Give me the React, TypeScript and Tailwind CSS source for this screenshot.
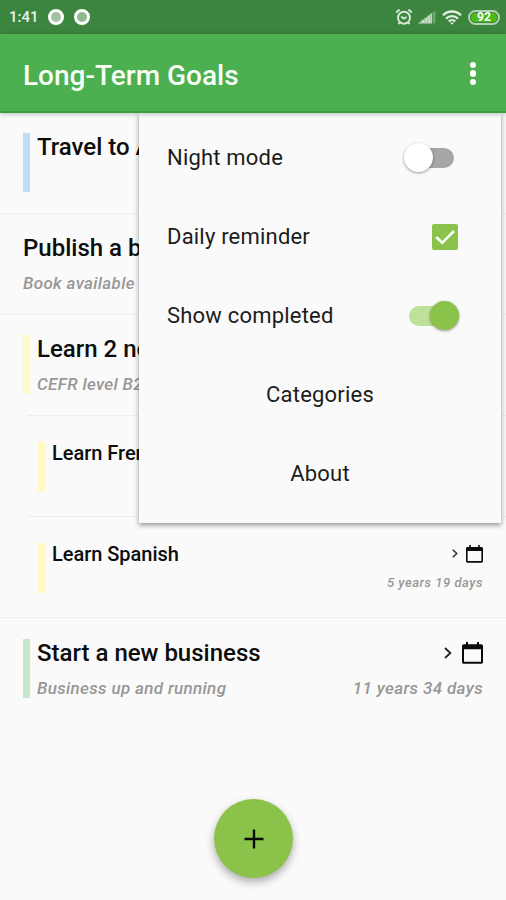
import React, { useState } from 'react';
import clsx from 'clsx';

interface Goal {
  id: number;
  title: string;
  note?: string;
  due?: string;
  color?: string;
  sub?: boolean;
  divider?: 'full' | 'inset';
}

const goals: Goal[] = [
  { id: 1, title: 'Travel to A', color: 'bg-[#bbdefb]', divider: 'full' },
  { id: 2, title: 'Publish a book', note: 'Book available', divider: 'full' },
  { id: 3, title: 'Learn 2 new', note: 'CEFR level B2', color: 'bg-[#fff9c4]', divider: 'inset' },
  { id: 4, title: 'Learn French', color: 'bg-[#fff9c4]', sub: true, divider: 'inset' },
  { id: 5, title: 'Learn Spanish', due: '5 years 19 days', color: 'bg-[#fff9c4]', sub: true, divider: 'full' },
  { id: 6, title: 'Start a new business', note: 'Business up and running', due: '11 years 34 days', color: 'bg-[#c8e6c9]' },
];

function StatusBar() {
  return (
    <div className="h-[34px] shrink-0 bg-[#3b853e] flex items-center justify-between pl-[9px] pr-[6px] text-[#e9f2e9]">
      <div className="flex items-center">
        <span className="w-[30px] pt-px text-[15px] leading-none font-medium whitespace-nowrap">1:41</span>
        <span className="ml-[9px] w-4 h-4 rounded-full border-[3.5px] border-white bg-[#a3c2a4]" />
        <span className="ml-[10px] w-4 h-4 rounded-full border-[3.5px] border-white bg-[#8dbb8f]" />
      </div>
      <div className="flex items-center">
        {/* Alarm */}
        <svg className="w-[18px] h-[18px]" viewBox="0 0 18 18" fill="none" stroke="#d5e6d5" strokeWidth="2">
          <circle cx="9" cy="9.7" r="6" />
          <path d="M6.2 8.6 9 10.6l2.6-1.6M1.2 4.4 4.6 1.6M16.8 4.4 13.4 1.6M4.6 14.6 3.4 16M13.4 14.6l1.2 1.4" />
        </svg>
        {/* Signal */}
        <svg className="ml-[4px] w-[20px] h-[14px]" viewBox="0 0 20 14">
          <path d="M1 13.5 15 3v10.5z" fill="#c3dac3" />
          <path d="M15.6 2.5 18.4.5v13h-2.8z" fill="#6fa571" />
          <path d="M4.6 9v5M7.6 7v7M10.6 5v9M13.6 3v11" stroke="#8ab68b" strokeWidth=".5" />
        </svg>
        {/* Wifi */}
        <svg className="ml-[5px] w-[20px] h-[15px]" viewBox="0 0 20 15" fill="none" stroke="#e3eee3" strokeWidth="2.3">
          <path d="M1 5.3a12.6 12.6 0 0 1 18 0M4 8.6a8.5 8.5 0 0 1 12 0M6.8 11.4a4.6 4.6 0 0 1 6.4 0" />
          <path d="M10 14.8 7.8 12.4h4.4z" fill="#e3eee3" stroke="none" />
        </svg>
        {/* Battery */}
        <span className="ml-[6px] w-[32px] h-[15px] rounded-full border-2 border-[#b5d0b5] p-px flex">
          <span className="flex-1 rounded-full bg-[#4cbb17] flex items-center justify-center text-white text-[12px] leading-none font-bold">
            92
          </span>
        </span>
      </div>
    </div>
  );
}

function DueDate({ goal }: { goal: Goal }) {
  return (
    <div className="ml-auto flex flex-col items-end">
      <div className={clsx('flex items-center', goal.sub ? 'h-6' : 'h-[31px]')}>
        <svg className={goal.sub ? 'w-[6px] h-[9px] mr-[8px]' : 'w-[8px] h-[12px] mr-[10px]'} viewBox="0 0 8 12" fill="none" stroke="#222" strokeWidth="1.8">
          <path d="m1 1 5.4 5L1 11" />
        </svg>
        <svg className={goal.sub ? 'w-[17px] h-[18px]' : 'w-[21px] h-[22px]'} viewBox="0 0 21 22">
          <path d="M4 0h2v2.2h9V0h2v2.2h2.2c1 0 1.8.8 1.8 1.8v16c0 1-.8 1.8-1.8 1.8H1.8C.8 21.8 0 21 0 20V4c0-1 .8-1.8 1.8-1.8H4zM2 7.2v12.6h17V7.2z" fill="#0b0b0b" fillRule="evenodd" />
        </svg>
      </div>
      <span
        className={clsx(
          'italic font-medium text-[#979797] whitespace-nowrap',
          goal.sub ? 'mt-[9px] text-[13px] leading-4 tracking-[0.53px]' : 'mt-[9px] text-[17px] leading-5 tracking-[0.35px]',
        )}
      >
        {goal.due}
      </span>
    </div>
  );
}

function GoalRow({ goal }: { goal: Goal }) {
  return (
    <li className={clsx('relative h-[101.2px] flex items-start pr-[23px]', goal.sub ? 'pt-[24px] pl-[38px]' : 'pt-[19px] pl-[23px]')}>
      {goal.color && (
        <span className={clsx('w-[7px] mr-[7px] shrink-0', goal.color, goal.sub ? 'mt-px h-[50px]' : 'mt-px h-[59px]')} />
      )}
      <div className="flex flex-col whitespace-nowrap">
        <span
          className={clsx(
            'text-[#0d0d0d] font-medium',
            goal.sub ? 'text-[20px] leading-6 tracking-[-0.03px]' : 'text-[24px] leading-[30px]',
          )}
        >
          {goal.title}
        </span>
        {goal.note && (
          <span className="mt-[10px] text-[17px] leading-5 tracking-[0.33px] italic font-medium text-[#979797]">{goal.note}</span>
        )}
      </div>
      {goal.due && <DueDate goal={goal} />}
      {goal.divider && (
        <span className={clsx('absolute right-0 bottom-[0.5px] h-px bg-[#ededed]', goal.divider === 'full' ? 'left-0' : 'left-7')} />
      )}
    </li>
  );
}

function Toggle({ on, onClick }: { on: boolean; onClick: () => void }) {
  return (
    <button onClick={onClick} className="relative w-[52px] h-[30px] flex items-center justify-center">
      <span className={clsx('w-[48px] h-5 rounded-full', on ? 'bg-[#bfe098]' : 'bg-[#a6a6a6]')} />
      <span
        className={clsx(
          'absolute top-[0.5px] w-[29px] h-[29px] rounded-full shadow-[0_1px_3px_rgba(0,0,0,0.4)]',
          on ? 'right-0 bg-[#8bc34a]' : 'left-0 bg-white',
        )}
      />
    </button>
  );
}

export default function App() {
  const [nightMode, setNightMode] = useState(false);
  const [reminder, setReminder] = useState(true);
  const [showCompleted, setShowCompleted] = useState(true);

  return (
    <div className="relative w-[506px] h-[900px] overflow-hidden bg-[#fafafa] font-['Roboto',sans-serif] flex flex-col">
      <StatusBar />

      {/* App bar */}
      <header className="relative z-20 h-[79px] shrink-0 bg-[#4caf50] border-b-2 border-[#36a23a] shadow-[0_1px_5px_rgba(0,0,0,0.25)] flex items-center justify-between pl-[23px] pr-[30px]">
        <h1 className="text-[28px] leading-none font-medium text-[#f8fdf8] pt-[6px]">Long-Term Goals</h1>
        <button className="flex flex-col gap-[2px] pt-[2px]">
          <span className="w-[6.5px] h-[6.5px] rounded-full bg-white" />
          <span className="w-[6.5px] h-[6.5px] rounded-full bg-white" />
          <span className="w-[6.5px] h-[6.5px] rounded-full bg-white" />
        </button>
      </header>

      <ul>
        {goals.map((goal) => (
          <GoalRow key={goal.id} goal={goal} />
        ))}
      </ul>

      {/* Overflow menu */}
      <div className="absolute z-10 left-[139px] top-[113px] w-[362px] h-[410px] bg-[#fafafa] shadow-[0_2px_5px_rgba(0,0,0,0.42)] pt-[5px] text-[22px] leading-none tracking-[0.2px] text-[#1c1c1c]">
        <div className="h-[79px] flex items-center justify-between pl-[28px] pr-[45px]">
          <span className="pt-px">Night mode</span>
          <Toggle on={nightMode} onClick={() => setNightMode(!nightMode)} />
        </div>
        <div className="h-[79px] flex items-center justify-between pl-[28px] pr-[43px]">
          <span className="pt-px">Daily reminder</span>
          <button
            onClick={() => setReminder(!reminder)}
            className={clsx('w-[26px] h-[26px] rounded-[2px] flex items-center justify-center', reminder ? 'bg-[#8bc34a]' : 'border-2 border-[#757575]')}
          >
            {reminder && (
              <svg className="w-5 h-4" viewBox="0 0 20 16" fill="none" stroke="#fff" strokeWidth="2.6">
                <path d="m1.2 8 6 5.8L19 2" />
              </svg>
            )}
          </button>
        </div>
        <div className="h-[79px] flex items-center justify-between pl-[28px] pr-[42px]">
          <span>Show completed</span>
          <Toggle on={showCompleted} onClick={() => setShowCompleted(!showCompleted)} />
        </div>
        <div className="h-[79px] flex items-center justify-center">Categories</div>
        <div className="h-[79px] flex items-center justify-center">About</div>
      </div>

      {/* Add goal */}
      <button className="absolute left-[214px] top-[799px] w-[79px] h-[79px] rounded-full bg-[#8bc34a] shadow-[0_4px_9px_rgba(0,0,0,0.32)] flex items-center justify-center">
        <svg className="w-5 h-5" viewBox="0 0 20 20" stroke="#0a0a0a" strokeWidth="2.4">
          <path d="M10 0.5v19M0.5 10h19" />
        </svg>
      </button>
    </div>
  );
}
